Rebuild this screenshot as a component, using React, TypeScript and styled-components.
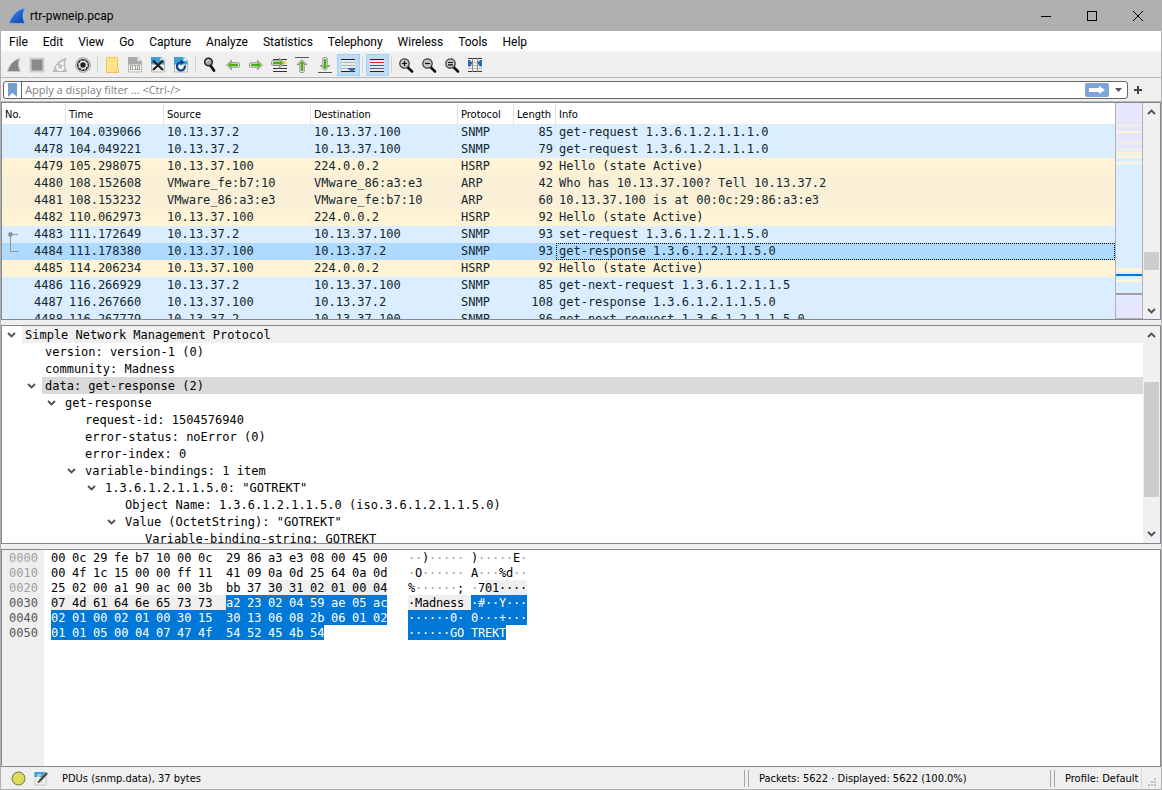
import React from "react";
import styled, { createGlobalStyle, css } from "styled-components";

const UI = `Roboto, "Open Sans", sans-serif`;
const COMPACT = `"DejaVu Sans Condensed", "DejaVu Sans", sans-serif`;
const MONO = `"DejaVu Sans Mono", "Liberation Mono", monospace`;

const BLUE = "#daeeff";
const YELLOW = "#fff3d6";
const BEIGE = "#faf0d7";
const LAVENDER = "#e7e6ff";
const SELECT = "#0078d7";
const CHROME = "#efefef";

const GlobalStyle = createGlobalStyle`
  *, *::before, *::after { box-sizing: border-box; }
  body { margin: 0; background: ${CHROME}; }
  button, input { font: inherit; color: inherit; }
`;

/* ---------- Window frame ---------- */

const Window = styled.div`
  display: flex;
  flex-direction: column;
  height: 100vh;
  overflow: hidden;
  border: 1px solid #b0b0b0;
  border-top: 0;
  background: ${CHROME};
  color: #000;
  font: 12px/16px ${UI};
`;

const BareButton = styled.button`
  display: flex;
  align-items: center;
  justify-content: center;
  padding: 0;
  border: 0;
  background: none;
`;

const TitleBar = styled.header`
  display: flex;
  align-items: center;
  flex: 0 0 31px;
  padding-left: 7px;
  background: #b0b0b0;
`;

const Title = styled.h1`
  flex: 1;
  margin: 0 0 0 4px;
  font-size: 12px;
  font-weight: 400;
`;

const CaptionButton = styled(BareButton)`
  width: 46px;
  height: 31px;
`;

const MenuBar = styled.nav`
  display: flex;
  flex: 0 0 22px;
  padding-left: 1px;
  border-bottom: 2px solid #f3f3f3;
  background: #fff;
`;

const MenuItem = styled(BareButton)`
  height: 20px;
  padding: 2px 8px 0 7px;
`;

const ToolBar = styled.div`
  display: flex;
  flex: 0 0 25px;
  align-items: center;
  padding-left: 2px;
  border-bottom: 1px solid #b8b8b8;
`;

const ToolButton = styled(BareButton)<{ $on?: boolean }>`
  width: 23px;
  height: 22px;
  padding-right: 1px;
  ${(p) => p.$on && css`
    border: 1px solid #99d1ff;
    background: #bfdcf3;
  `}
`;

const ToolDivider = styled.span`
  width: 1px;
  height: 16px;
  margin: 0 3px 0 2px;
  background: #d2d2d2;
`;

/* ---------- Display filter ---------- */

const FilterBar = styled.form`
  display: flex;
  flex: 0 0 24px;
  align-items: center;
  padding: 0 18px 0 2px;
  border-bottom: 1px solid #b8b8b8;
`;

const FilterBox = styled.div`
  display: flex;
  flex: 1;
  align-items: center;
  height: 18px;
  border: 1px solid #666;
  border-radius: 3px;
  background: #fff;
`;

const BookmarkButton = styled(BareButton)`
  width: 18px;
  height: 16px;
  border-right: 1px solid #666;
`;

const FilterInput = styled.input`
  flex: 1;
  min-width: 0;
  height: 16px;
  padding: 0 3px;
  border: 0;
  outline: 0;
  background: none;
  font: 11px/16px "Open Sans", sans-serif;
  &::placeholder { color: #808080; opacity: 1; }
`;

const ApplyButton = styled(BareButton)`
  width: 24px;
  height: 14px;
  border-radius: 2px;
  background: #7ba6d8;
`;

const DropButton = styled(BareButton)`
  width: 17px;
  height: 16px;
  margin-left: 1px;
`;

const AddButton = styled(BareButton)`
  width: 10px;
  margin-left: 5px;
`;

/* ---------- Panes ---------- */

const Panes = styled.main`
  display: grid;
  flex: 1;
  min-height: 0;
  grid-template-rows: repeat(3, minmax(0, 1fr));
  gap: 5px;
`;

const Pane = styled.section`
  display: flex;
  min-width: 0;
  overflow: hidden;
  border: 1px solid #828790;
  background: #fff;
`;

const PaneBody = styled.div`
  flex: 1;
  min-width: 0;
  overflow: hidden;
`;

const PacketTable = styled.table`
  width: 100%;
  table-layout: fixed;
  border-spacing: 0;
`;

const HeaderCell = styled.th<{ $w?: number }>`
  width: ${(p) => (p.$w ? `${p.$w}px` : "auto")};
  height: 21px;
  padding: 2px 0 0 3px;
  border-right: 1px solid #e2e2e2;
  text-align: left;
  white-space: nowrap;
  font: 11px/16px ${COMPACT};
  &:last-child { border-right: 0; }
`;

const PacketRow = styled.tr<{ $bg: string }>`
  background: ${(p) => p.$bg};
  color: #12272e;
  font: 12px/17px ${MONO};
`;

const Cell = styled.td<{ $right?: boolean; $focus?: boolean }>`
  height: 17px;
  padding: 0 3px;
  white-space: nowrap;
  overflow: hidden;
  text-align: ${(p) => (p.$right ? "right" : "left")};
  ${(p) => p.$focus && css`
    outline: 1px dotted #000;
    outline-offset: -1px;
  `}
`;

const NumberCell = styled.div`
  display: flex;
  justify-content: space-between;
  height: 17px;
`;

const MiniMap = styled.div`
  flex: 0 0 28px;
  border: solid #b0b0b0;
  border-width: 0 1px;
  svg { display: block; width: 100%; height: 100%; }
`;

const ScrollTrack = styled.div`
  display: flex;
  flex: 0 0 17px;
  flex-direction: column;
  padding: 0 1px;
  background: #f0f0f0;
`;

const ScrollButton = styled(BareButton)`
  flex: 0 0 17px;
`;

const ScrollPart = styled.div<{ $size: number; $thumb?: boolean }>`
  flex: ${(p) => p.$size} 1 0;
  background: ${(p) => (p.$thumb ? "#cdcdcd" : "none")};
`;

/* ---------- Protocol tree ---------- */

const Tree = styled.ul`
  margin: 0;
  padding: 0;
  list-style: none;
  font: 12px/19px ${MONO};
`;

const TreeItem = styled.li<{ $level: number }>`
  display: flex;
  height: 17px;
  padding-left: ${(p) => p.$level * 20}px;
`;

const TreeToggle = styled(BareButton)`
  width: 20px;
  padding-right: 2px;
`;

const TreeSpacer = styled.span`
  width: 20px;
`;

const TreeLabel = styled.span<{ $bg?: string }>`
  flex: 1;
  padding-left: 3px;
  white-space: nowrap;
  background: ${(p) => p.$bg || "none"};
`;

/* ---------- Hex dump ---------- */

const HexBody = styled(PaneBody)`
  background: linear-gradient(to right, ${CHROME} 42px, #fff 42px);
`;

const HexTable = styled.table`
  border-collapse: collapse;
  font: 12px/17px ${MONO};
`;

const Offset = styled.th<{ $active: boolean }>`
  width: 42px;
  padding: 0 0 0 7px;
  font-weight: 400;
  color: ${(p) => (p.$active ? "#555" : "#a0a0a0")};
`;

const HexCell = styled.td`
  padding: 0 0 0 7px;
`;

const AsciiCell = styled(HexCell)`
  padding-left: 21px;
`;

const Run = styled.div`
  display: flex;
  height: 15px;
`;

type Mark = "none" | "field" | "selected";

const markStyle: Record<Mark, string> = {
  none: "",
  field: `background: ${CHROME};`,
  selected: `background: ${SELECT}; color: #fff;`,
};

const Byte = styled.span<{ $mark: Mark; $cols: number }>`
  width: ${(p) => p.$cols * 7}px;
  white-space: nowrap;
  ${(p) => markStyle[p.$mark]}
`;

const Char = styled(Byte)<{ $dim: boolean }>`
  ${(p) => p.$dim && "color: #a0a0a0;"}
`;

/* ---------- Status bar ---------- */

const StatusBar = styled.footer`
  display: flex;
  flex: 0 0 22px;
  align-items: center;
  padding-left: 10px;
  font: 11px/16px ${COMPACT};
`;

const StatusButton = styled(BareButton)`
  margin-right: 8px;
`;

const StatusText = styled.span<{ $w?: number }>`
  flex: ${(p) => (p.$w ? `0 0 ${p.$w}px` : "1")};
  padding: 2px 0 0 5px;
  white-space: nowrap;
`;

const Grip = styled.span`
  width: 5px;
  height: 17px;
  margin-right: 5px;
  border: solid #a8a8a8;
  border-width: 0 1px;
`;

const ResizeCorner = styled.span`
  display: flex;
  align-items: flex-end;
  justify-content: center;
  width: 20px;
  height: 18px;
  border-left: 1px solid #d7d7d7;
`;

/* ---------- Icons ---------- */

const Icon = ({ children, size = 16 }: { children: React.ReactNode; size?: number }) => (
  <svg width={size} height={size} viewBox="0 0 16 16" fill="none" aria-hidden="true">{children}</svg>
);

const FIN = "M1.500 14.500C3 8.500 7 3 14 1.500C11.800 5.500 12.200 10.500 14.500 14.500Z";

const PageIcon = ({ top, children }: { top: string; children: React.ReactNode }) => (
  <Icon>
    <path d="M1.500 .500h9.500l3.500 3.500v11h-13z" fill="#f1f1ee" stroke="#b9b9b4" />
    <path d="M1 0h10l3.500 3.500v4H1z" fill={top} />
    <path d="M10.500 0v4h4.500z" fill="#e8e8e4" />
    {children}
  </Icon>
);

const ArrowShape = ({ turn = 0 }: { turn?: number }) => (
  <g transform={`rotate(${turn} 8 8)`}>
    <path d="M1.500 8l5-4.800v2.600h6.500q1.500 0 1.500 1.300v1.800q0 1.300-1.500 1.300H6.500v2.600z" fill="#fff" stroke="#8f8f8f" strokeLinejoin="round" />
    <path d="M3 8l2.800-2.700V7h7v2h-7v1.700z" fill="#4fb412" stroke="#45a010" strokeWidth=".5" />
  </g>
);

const Lens = ({ children }: { children?: React.ReactNode }) => (
  <Icon>
    <path d="M10 10.500l4 4" stroke="#111" strokeWidth="2.600" strokeLinecap="round" />
    <circle cx="6.500" cy="6.500" r="4.700" fill="#c6c6c6" stroke="#333" strokeWidth="1.200" />
    <g stroke="#111" strokeWidth="1.200">{children}</g>
  </Icon>
);

const icons: Record<string, React.ReactNode> = {
  start: <Icon><path d={FIN} fill="#858585" stroke="#c9c9c9" /></Icon>,
  stop: <Icon><rect x="1.500" y="1.500" width="13" height="13" fill="#8a8a8a" stroke="#cfcfcf" strokeWidth="2" /></Icon>,
  restart: (
    <Icon>
      <path d={FIN} fill="#c4c4c4" stroke="#b4b4b4" />
      <path d="M5.800 8.500a3 3 0 1 0 5.200 .500" stroke="#fff" strokeWidth="1.800" />
      <path d="M7.500 6.500l4-2.500v4.500z" fill="#fff" />
    </Icon>
  ),
  options: (
    <Icon>
      <circle cx="8" cy="8" r="7.300" fill="#e4e4e4" stroke="#8a8a8a" strokeWidth=".8" />
      <circle cx="8" cy="8" r="6" fill="#222" />
      <circle cx="8" cy="8" r="4.200" stroke="#eee" strokeWidth="1.400" strokeDasharray="2.200 1.100" />
      <circle cx="8" cy="8" r="3.300" stroke="#eee" strokeWidth="1.200" />
      <circle cx="8" cy="8" r="2" fill="#222" />
    </Icon>
  ),
  open: (
    <Icon>
      <path d="M2.500 .500h11v11h1v4h-12z" fill="#ffe38a" stroke="#edc75c" />
      <path d="M12 15.500v-3.500q0-1 1.200-1t1.300 1v3.500z" fill="#ffe9a4" stroke="#e3b94b" strokeWidth=".8" />
    </Icon>
  ),
  save: (
    <PageIcon top="#a9a9a9">
      <g stroke="#a0a0a0">
        <rect x="3.500" y="8.500" width="2" height="4" /><path d="M7 8.500h1.500v4M7 12.500h3" /><rect x="10.500" y="8.500" width="2" height="4" />
      </g>
    </PageIcon>
  ),
  close: (
    <PageIcon top="#3fa0d4">
      <path d="M3 3.500l10 9.500M13 3.500L3 13" stroke="#222" strokeWidth="2.300" />
    </PageIcon>
  ),
  reload: (
    <PageIcon top="#3fa0d4">
      <path d="M11.800 8.500A4 4 0 1 1 7.500 5.500" stroke="#14438e" strokeWidth="2.200" />
      <path d="M7 2.500l4.500 2.800L7.500 8.500z" fill="#14438e" />
    </PageIcon>
  ),
  find: (
    <Icon>
      <path d="M8.500 8.500l3.500 5" stroke="#111" strokeWidth="2.800" strokeLinecap="round" />
      <circle cx="6.500" cy="5" r="3.800" fill="#a9a9a9" stroke="#222" strokeWidth="1.500" />
      <path d="M4.800 5a2 2 0 0 1 2-2" stroke="#eee" />
    </Icon>
  ),
  back: <Icon><ArrowShape /></Icon>,
  forward: <Icon><ArrowShape turn={180} /></Icon>,
  goto: (
    <Icon>
      <path d="M2 2.500h14M2 11.500h14M2 14.500h14" stroke="#333" />
      <path d="M2 8.500h14" stroke="#555" />
      <rect x="12" y="4" width="4" height="3" fill="#fbdc57" />
      <g transform="translate(-1 -2)"><ArrowShape turn={180} /></g>
    </Icon>
  ),
  first: (
    <Icon>
      <path d="M1 .500h14" stroke="#555" />
      <g transform="translate(0 1)"><ArrowShape turn={90} /></g>
    </Icon>
  ),
  last: (
    <Icon>
      <path d="M1 15.500h14" stroke="#555" />
      <g transform="translate(0 -1)"><ArrowShape turn={-90} /></g>
    </Icon>
  ),
  autoscroll: (
    <Icon>
      <path d="M1 2h14v13H1z" fill="#e3ebee" />
      <path d="M1 2.500h14M1 14.500h14" stroke="#222" />
      <path d="M1 5.500h14M1 8.500h14M1 11.500h14" stroke="#b4b8b0" />
      <path d="M8 11h7.500q0 2-2 2.500l-1.500 2-1.500-2q-2.500-.500-2.500-2.500z" fill="#2f69b4" />
    </Icon>
  ),
  colorize: (
    <Icon>
      <path d="M1 2h14v13H1z" fill="#dcebf6" />
      <path d="M1 2.500h14M1 14.500h14" stroke="#222" />
      <path d="M1 5.500h14" stroke="#ef2929" />
      <path d="M1 8.500h14" stroke="#3465a4" />
      <path d="M1 11.500h14" stroke="#75507b" />
    </Icon>
  ),
  zoomIn: <Lens><path d="M4 6.500h5M6.500 4v5" /></Lens>,
  zoomOut: <Lens><path d="M4 6.500h5" /></Lens>,
  zoomReset: <Lens><path d="M4 5.500h5M4 7.800h5" /></Lens>,
  resize: (
    <Icon>
      <path d="M1 1.500h14M1 14.500h14" stroke="#333" />
      <path d="M1 5.500h14M1 8.500h14M1 11.500h14" stroke="#bbb" />
      <path d="M5.500 1v14M10.500 1v14" stroke="#888" />
      <path d="M1 3h2l2.500 3-2.500 3.500H1zM15 3h-2l-2.500 3 2.500 3.500h2z" fill="#2f69b4" />
    </Icon>
  ),
};

const Chevron = ({ up }: { up?: boolean }) => (
  <svg width="9" height="6" viewBox="0 0 9 6" fill="none" aria-hidden="true">
    <path d={up ? "M1 5l3.500-3.500L8 5" : "M1 1l3.500 3.500L8 1"} stroke="#505050" strokeWidth="1.800" />
  </svg>
);

const Scrollbar = ({ before, thumb, after }: { before: number; thumb: number; after: number }) => (
  <ScrollTrack>
    <ScrollButton aria-label="Scroll up"><Chevron up /></ScrollButton>
    <ScrollPart $size={before} />
    <ScrollPart $size={thumb} $thumb />
    <ScrollPart $size={after} />
    <ScrollButton aria-label="Scroll down"><Chevron /></ScrollButton>
  </ScrollTrack>
);

/* ---------- Data ---------- */

const menus = ["File", "Edit", "View", "Go", "Capture", "Analyze", "Statistics", "Telephony", "Wireless", "Tools", "Help"];

const tools: { id: string; label: string; on?: boolean }[][] = [
  [
    { id: "start", label: "Start capture" },
    { id: "stop", label: "Stop capture" },
    { id: "restart", label: "Restart capture" },
    { id: "options", label: "Capture options" },
  ],
  [
    { id: "open", label: "Open file" },
    { id: "save", label: "Save file" },
    { id: "close", label: "Close file" },
    { id: "reload", label: "Reload file" },
  ],
  [
    { id: "find", label: "Find packet" },
    { id: "back", label: "Previous packet" },
    { id: "forward", label: "Next packet" },
    { id: "goto", label: "Go to packet" },
    { id: "first", label: "First packet" },
    { id: "last", label: "Last packet" },
    { id: "autoscroll", label: "Auto scroll", on: true },
  ],
  [{ id: "colorize", label: "Colorize", on: true }],
  [
    { id: "zoomIn", label: "Zoom in" },
    { id: "zoomOut", label: "Zoom out" },
    { id: "zoomReset", label: "Normal size" },
    { id: "resize", label: "Resize columns" },
  ],
];

const columns: [string, number?][] = [
  ["No.", 64], ["Time", 98], ["Source", 147], ["Destination", 147], ["Protocol", 56], ["Length", 42], ["Info"],
];

const packets: [number, string, string, string, string, number, string][] = [
  [4477, "104.039066", "10.13.37.2", "10.13.37.100", "SNMP", 85, "get-request 1.3.6.1.2.1.1.1.0"],
  [4478, "104.049221", "10.13.37.2", "10.13.37.100", "SNMP", 79, "get-request 1.3.6.1.2.1.1.1.0"],
  [4479, "105.298075", "10.13.37.100", "224.0.0.2", "HSRP", 92, "Hello (state Active)"],
  [4480, "108.152608", "VMware_fe:b7:10", "VMware_86:a3:e3", "ARP", 42, "Who has 10.13.37.100? Tell 10.13.37.2"],
  [4481, "108.153232", "VMware_86:a3:e3", "VMware_fe:b7:10", "ARP", 60, "10.13.37.100 is at 00:0c:29:86:a3:e3"],
  [4482, "110.062973", "10.13.37.100", "224.0.0.2", "HSRP", 92, "Hello (state Active)"],
  [4483, "111.172649", "10.13.37.2", "10.13.37.100", "SNMP", 93, "set-request 1.3.6.1.2.1.1.5.0"],
  [4484, "111.178380", "10.13.37.100", "10.13.37.2", "SNMP", 93, "get-response 1.3.6.1.2.1.1.5.0"],
  [4485, "114.206234", "10.13.37.100", "224.0.0.2", "HSRP", 92, "Hello (state Active)"],
  [4486, "116.266929", "10.13.37.2", "10.13.37.100", "SNMP", 85, "get-next-request 1.3.6.1.2.1.1.5"],
  [4487, "116.267660", "10.13.37.100", "10.13.37.2", "SNMP", 108, "get-response 1.3.6.1.2.1.1.5.0"],
  [4488, "116.267779", "10.13.37.2", "10.13.37.100", "SNMP", 86, "get-next-request 1.3.6.1.2.1.1.5.0"],
];

const SELECTED_PACKET = 4484;
const protocolColor: Record<string, string> = { SNMP: BLUE, HSRP: YELLOW, ARP: BEIGE };

const mapBands: [number, number, string][] = [
  [0, 47, LAVENDER], [22, 1, YELLOW], [28, 2, YELLOW], [39, 1, YELLOW], [46, 1, YELLOW],
  [47, 143, BLUE], [49, 2, YELLOW], [52, 3, YELLOW], [59, 2, YELLOW],
  [165, 4, YELLOW], [171, 2, SELECT], [176, 3, YELLOW], [190, 2, "#a0a0a0"],
  [192, 24, LAVENDER], [195, 2, BLUE], [215, 1, "#b0b0b0"],
];

const tree: { level: number; text: string; open?: boolean; bg?: string }[] = [
  { level: 0, text: "Simple Network Management Protocol", open: true, bg: "#f0f0f0" },
  { level: 1, text: "version: version-1 (0)" },
  { level: 1, text: "community: Madness" },
  { level: 1, text: "data: get-response (2)", open: true, bg: "#d9d9d9" },
  { level: 2, text: "get-response", open: true },
  { level: 3, text: "request-id: 1504576940" },
  { level: 3, text: "error-status: noError (0)" },
  { level: 3, text: "error-index: 0" },
  { level: 3, text: "variable-bindings: 1 item", open: true },
  { level: 4, text: "1.3.6.1.2.1.1.5.0: \"GOTREKT\"", open: true },
  { level: 5, text: "Object Name: 1.3.6.1.2.1.1.5.0 (iso.3.6.1.2.1.1.5.0)" },
  { level: 5, text: "Value (OctetString): \"GOTREKT\"", open: true },
  { level: 6, text: "Variable-binding-string: GOTREKT" },
];

const FIELD_START = 42;
const SELECTION_START = 56;

const dump = [
  "00 0c 29 fe b7 10 00 0c 29 86 a3 e3 08 00 45 00",
  "00 4f 1c 15 00 00 ff 11 41 09 0a 0d 25 64 0a 0d",
  "25 02 00 a1 90 ac 00 3b bb 37 30 31 02 01 00 04",
  "07 4d 61 64 6e 65 73 73 a2 23 02 04 59 ae 05 ac",
  "02 01 00 02 01 00 30 15 30 13 06 08 2b 06 01 02",
  "01 01 05 00 04 07 47 4f 54 52 45 4b 54",
].map((line) => line.split(" "));

const markOf = (index: number): Mark =>
  index >= SELECTION_START ? "selected" : index >= FIELD_START ? "field" : "none";

const printable = (byte: string) => {
  const code = parseInt(byte, 16);
  return code > 32 && code < 127 ? String.fromCharCode(code) : "·";
};

const HexRow = ({ bytes, row }: { bytes: string[]; row: number }) => (
  <tr>
    <Offset scope="row" $active={row > 2}>
      <Run>{(row * 16).toString(16).padStart(4, "0")}</Run>
    </Offset>
    <HexCell>
      <Run>
        {bytes.map((b, i) => {
          const mark = markOf(row * 16 + i);
          const ends = i === bytes.length - 1 || markOf(row * 16 + i + 1) !== mark;
          const gap = i === 7 ? 2 : 1;
          const fill = ends && i !== 7 ? 0 : gap;
          return (
            <React.Fragment key={i}>
              <Byte $mark={mark} $cols={2 + fill}>{b}</Byte>
              {fill === 0 && i < bytes.length - 1 && <Byte $mark="none" $cols={gap} />}
            </React.Fragment>
          );
        })}
      </Run>
    </HexCell>
    <AsciiCell>
      <Run>
        {bytes.map((b, i) => {
          const mark = markOf(row * 16 + i);
          const c = printable(b);
          return (
            <Char key={i} $mark={mark} $cols={i === 7 ? 2 : 1} $dim={c === "·" && mark === "none"}>{c}</Char>
          );
        })}
      </Run>
    </AsciiCell>
  </tr>
);

const Conversation = ({ last }: { last?: boolean }) => (
  <svg width="14" height="17" viewBox="0 0 14 17" fill="none" stroke="#8a959d" aria-hidden="true">
    {last ? <path d="M5.500 0v8.500h7.500" /> : (
      <>
        <path d="M5.500 17V8.500h7.500" />
        <circle cx="5.500" cy="8.500" r="2" fill="#8a959d" />
      </>
    )}
  </svg>
);

export default function App() {
  return (
    <Window>
      <GlobalStyle />
      <TitleBar>
        <svg width="18" height="18" viewBox="0 0 16 16" aria-hidden="true">
          <defs>
            <linearGradient id="fin" x1="0" y1="0" x2="1" y2="1">
              <stop offset="0" stopColor="#3c8cf0" /><stop offset="1" stopColor="#0a3fae" />
            </linearGradient>
          </defs>
          <path d="M1 14.500C3 8.500 7 2.500 15 1C12.500 5.500 12.800 10.500 15 14.500Z" fill="url(#fin)" stroke="#8fb4ea" strokeWidth=".5" />
        </svg>
        <Title>rtr-pwneip.pcap</Title>
        <CaptionButton aria-label="Minimize">
          <svg width="10" height="10"><path d="M0 5.500h10" stroke="#000" /></svg>
        </CaptionButton>
        <CaptionButton aria-label="Maximize">
          <svg width="10" height="10"><rect x=".5" y=".5" width="9" height="9" fill="none" stroke="#000" /></svg>
        </CaptionButton>
        <CaptionButton aria-label="Close">
          <svg width="10" height="10"><path d="M0 0l10 10M10 0L0 10" stroke="#000" /></svg>
        </CaptionButton>
      </TitleBar>

      <MenuBar>
        {menus.map((m) => <MenuItem key={m}>{m}</MenuItem>)}
      </MenuBar>

      <ToolBar role="toolbar" aria-label="Main toolbar">
        {tools.map((group, g) => (
          <React.Fragment key={g}>
            {g > 0 && <ToolDivider />}
            {group.map((t) => (
              <ToolButton key={t.id} $on={t.on} aria-label={t.label} aria-pressed={t.on}>{icons[t.id]}</ToolButton>
            ))}
          </React.Fragment>
        ))}
      </ToolBar>

      <FilterBar onSubmit={(e) => e.preventDefault()}>
        <FilterBox>
          <BookmarkButton type="button" aria-label="Filter bookmarks">
            <svg width="9" height="14"><path d="M0 0h9v14l-4.500-4L0 14z" fill="#729fcf" /></svg>
          </BookmarkButton>
          <FilterInput aria-label="Display filter" placeholder="Apply a display filter … <Ctrl-/>" />
          <ApplyButton aria-label="Apply filter">
            <svg width="16" height="8"><path d="M0 2h10V0l6 4-6 4V6H0z" fill="#fff" /></svg>
          </ApplyButton>
          <DropButton type="button" aria-label="Recent filters">
            <svg width="7" height="4"><path d="M0 0h7L3.500 4z" fill="#555" /></svg>
          </DropButton>
        </FilterBox>
        <AddButton type="button" aria-label="Add filter button">
          <svg width="8" height="8"><path d="M4 0v8M0 4h8" stroke="#444" strokeWidth="2" /></svg>
        </AddButton>
      </FilterBar>

      <Panes>
        <Pane aria-label="Packet list">
          <PaneBody>
            <PacketTable>
              <thead>
                <tr>{columns.map(([name, w]) => <HeaderCell key={name} $w={w}>{name}</HeaderCell>)}</tr>
              </thead>
              <tbody>
                {packets.map(([no, time, src, dst, proto, len, info]) => (
                  <PacketRow key={no} $bg={no === SELECTED_PACKET ? "#aedaff" : protocolColor[proto]}>
                    <Cell $right>
                      <NumberCell>
                        {no === 4483 || no === 4484 ? <Conversation last={no === 4484} /> : <span />}
                        {no}
                      </NumberCell>
                    </Cell>
                    <Cell>{time}</Cell>
                    <Cell>{src}</Cell>
                    <Cell>{dst}</Cell>
                    <Cell>{proto}</Cell>
                    <Cell $right>{len}</Cell>
                    <Cell $focus={no === SELECTED_PACKET}>{info}</Cell>
                  </PacketRow>
                ))}
              </tbody>
            </PacketTable>
          </PaneBody>
          <MiniMap>
            <svg viewBox="0 0 26 216" preserveAspectRatio="none" shapeRendering="crispEdges" aria-hidden="true">
              {mapBands.map(([y, h, fill], i) => <rect key={i} y={y} width="26" height={h} fill={fill} />)}
            </svg>
          </MiniMap>
          <Scrollbar before={131} thumb={18} after={32} />
        </Pane>

        <Pane aria-label="Packet details">
          <PaneBody>
            <Tree>
              {tree.map((n) => (
                <TreeItem key={n.text} $level={n.level}>
                  {n.open ? <TreeToggle aria-label="Collapse" aria-expanded="true"><Chevron /></TreeToggle> : <TreeSpacer />}
                  <TreeLabel $bg={n.bg}>{n.text}</TreeLabel>
                </TreeItem>
              ))}
            </Tree>
          </PaneBody>
          <Scrollbar before={39} thumb={115} after={29} />
        </Pane>

        <Pane aria-label="Packet bytes">
          <HexBody>
            <HexTable>
              <tbody>
                {dump.map((bytes, row) => <HexRow key={row} bytes={bytes} row={row} />)}
              </tbody>
            </HexTable>
          </HexBody>
        </Pane>
      </Panes>

      <StatusBar>
        <StatusButton aria-label="Expert information">
          <svg width="15" height="15"><circle cx="7.500" cy="7.500" r="6.500" fill="#dbdb5c" stroke="#77774a" /></svg>
        </StatusButton>
        <StatusButton aria-label="Capture comment">
          <svg width="15" height="15" fill="none">
            <path d="M1 1.500h11v12.500H1z" fill="#f4f4f1" stroke="#c4c4c0" />
            <path d="M.500 1h11l-4 5h-7z" fill="#3fa0d4" />
            <path d="M3 4h4M3 6h3" stroke="#fff" />
            <path d="M3 11h6" stroke="#bbb" />
            <path d="M13 2L6 9.500" stroke="#444" strokeWidth="2.500" />
            <path d="M6.500 9l-2.500 2.500" stroke="#222" strokeWidth="1.200" />
          </svg>
        </StatusButton>
        <StatusText>PDUs (snmp.data), 37 bytes</StatusText>
        <Grip />
        <StatusText $w={296}>Packets: 5622 · Displayed: 5622 (100.0%)</StatusText>
        <Grip />
        <StatusText $w={81}>Profile: Default</StatusText>
        <ResizeCorner>
          <svg width="10" height="10" fill="#bdbdbd" aria-hidden="true">
            <path d="M7 1h2v2h-2zM4 4h2v2h-2zM7 4h2v2h-2zM1 7h2v2h-2zM4 7h2v2h-2zM7 7h2v2h-2z" />
          </svg>
        </ResizeCorner>
      </StatusBar>
    </Window>
  );
}
